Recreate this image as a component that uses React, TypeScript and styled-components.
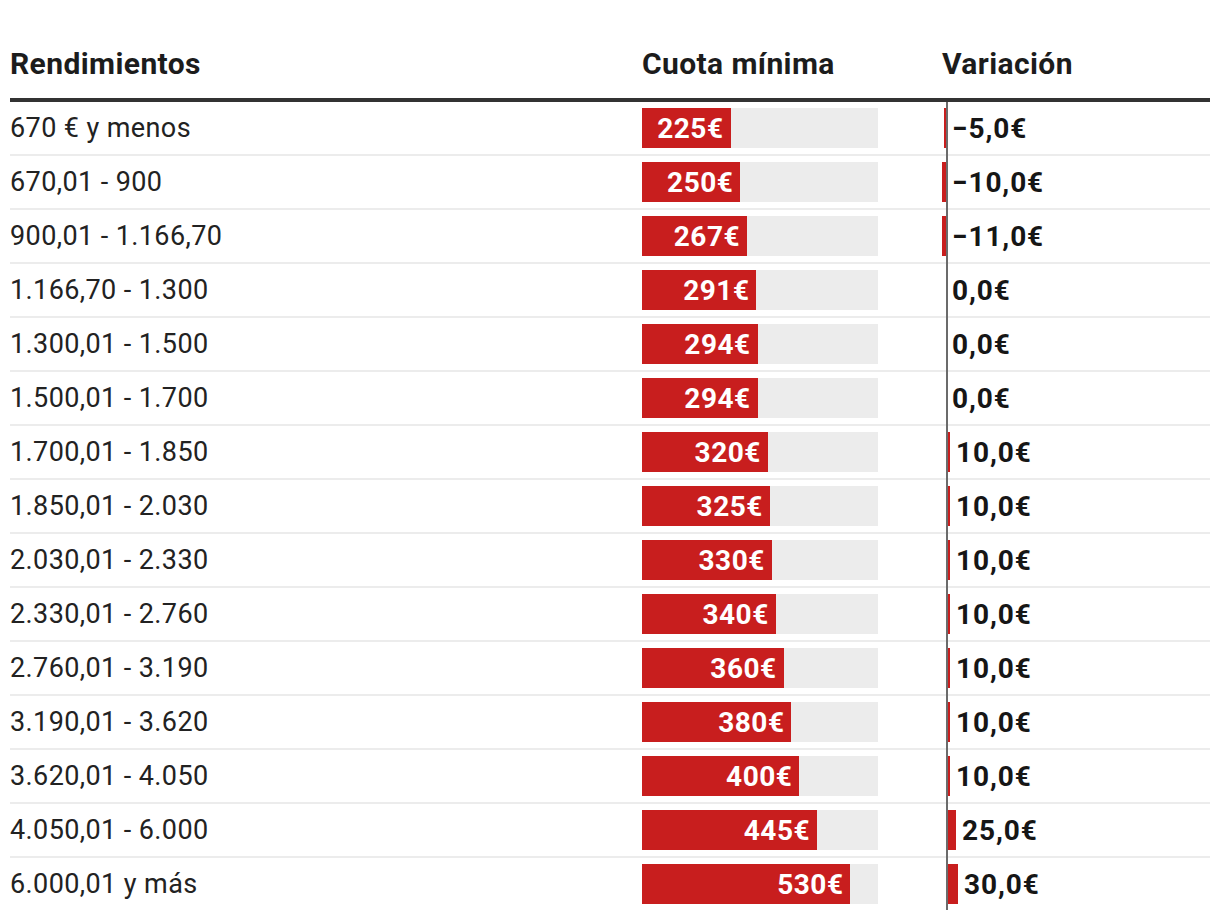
import React from "react";
import styled, { createGlobalStyle } from "styled-components";

const GlobalStyle = createGlobalStyle`
  html, body {
    margin: 0;
    padding: 0;
    background: #ffffff;
  }
  body {
    font-family: Roboto, "Liberation Sans", Arial, sans-serif;
    color: #222222;
  }
`;

type Row = { label: string; cuota: number; variacion: number };

const ROWS: Row[] = [
  { label: "670 € y menos", cuota: 225, variacion: -5 },
  { label: "670,01 - 900", cuota: 250, variacion: -10 },
  { label: "900,01 - 1.166,70", cuota: 267, variacion: -11 },
  { label: "1.166,70 - 1.300", cuota: 291, variacion: 0 },
  { label: "1.300,01 - 1.500", cuota: 294, variacion: 0 },
  { label: "1.500,01 - 1.700", cuota: 294, variacion: 0 },
  { label: "1.700,01 - 1.850", cuota: 320, variacion: 10 },
  { label: "1.850,01 - 2.030", cuota: 325, variacion: 10 },
  { label: "2.030,01 - 2.330", cuota: 330, variacion: 10 },
  { label: "2.330,01 - 2.760", cuota: 340, variacion: 10 },
  { label: "2.760,01 - 3.190", cuota: 360, variacion: 10 },
  { label: "3.190,01 - 3.620", cuota: 380, variacion: 10 },
  { label: "3.620,01 - 4.050", cuota: 400, variacion: 10 },
  { label: "4.050,01 - 6.000", cuota: 445, variacion: 25 },
  { label: "6.000,01 y más", cuota: 530, variacion: 30 },
];

const TRACK_WIDTH = 236;
const CUOTA_MAX = 600;
const VAR_SCALE = 0.4;

const Page = styled.div`
  padding: 0 10px;
  width: 1200px;
`;

const Table = styled.div`
  display: flex;
  flex-direction: column;
`;

const HeaderRow = styled.div`
  display: grid;
  grid-template-columns: 632px 300px 1fr;
  padding-top: 47px;
  padding-bottom: 17px;
  border-bottom: 4px solid #333333;
`;

const HeaderCell = styled.div`
  font-size: 30px;
  line-height: 34px;
  font-weight: 700;
  letter-spacing: 0.4px;
  color: #1c1c1c;
  white-space: nowrap;
`;

const Body = styled.div`
  position: relative;
  display: flex;
  flex-direction: column;
`;

const AxisLine = styled.div`
  position: absolute;
  top: 0;
  bottom: 0;
  left: 936px;
  width: 2px;
  background: #6b6b6b;
  z-index: 2;
`;

const DataRow = styled.div<{ $last?: boolean }>`
  display: grid;
  grid-template-columns: 632px 300px 1fr;
  align-items: center;
  height: 52px;
  border-bottom: ${(p) => (p.$last ? "none" : "2px solid #ececec")};
`;

const LabelCell = styled.div`
  font-size: 27px;
  letter-spacing: 0.4px;
  color: #222222;
  white-space: nowrap;
`;

const Track = styled.div`
  width: ${TRACK_WIDTH}px;
  height: 40px;
  background: #ececec;
  display: flex;
`;

const Bar = styled.div`
  height: 100%;
  background: #c81e1e;
  display: flex;
  align-items: center;
  justify-content: flex-end;
  padding-right: 7px;
  box-sizing: border-box;
  color: #ffffff;
  font-weight: 700;
  font-size: 28px;
  letter-spacing: 0.5px;
  white-space: nowrap;
`;

const VarCell = styled.div`
  display: flex;
  align-items: center;
  height: 40px;
`;

const NegZone = styled.div`
  width: 4px;
  height: 100%;
  display: flex;
  justify-content: flex-end;
  flex-shrink: 0;
`;

const PosZone = styled.div`
  height: 100%;
  display: flex;
  align-items: center;
`;

const VarBar = styled.div`
  height: 100%;
  background: #c81e1e;
  flex-shrink: 0;
`;

const VarValue = styled.span`
  margin-left: 6px;
  font-size: 28px;
  font-weight: 700;
  letter-spacing: 0.9px;
  color: #161616;
  white-space: nowrap;
`;

const fmtCuota = (n: number) => `${n}€`;
const fmtVar = (n: number) => {
  const s = Math.abs(n).toFixed(1).replace(".", ",");
  return `${n < 0 ? "\u2212" : ""}${s}€`;
};

export default function App() {
  return (
    <>
      <GlobalStyle />
      <Page>
        <Table>
          <HeaderRow>
            <HeaderCell>Rendimientos</HeaderCell>
            <HeaderCell>Cuota mínima</HeaderCell>
            <HeaderCell>Variación</HeaderCell>
          </HeaderRow>
          <Body>
            <AxisLine />
            {ROWS.map((r, i) => {
              const neg = r.variacion < 0 ? Math.abs(r.variacion) * VAR_SCALE : 0;
              const pos = r.variacion > 0 ? r.variacion * VAR_SCALE : 0;
              return (
                <DataRow key={r.label} $last={i === ROWS.length - 1}>
                  <LabelCell>{r.label}</LabelCell>
                  <Track>
                    <Bar style={{ width: (r.cuota / CUOTA_MAX) * TRACK_WIDTH }}>
                      {fmtCuota(r.cuota)}
                    </Bar>
                  </Track>
                  <VarCell>
                    <NegZone>
                      <VarBar style={{ width: neg }} />
                    </NegZone>
                    <PosZone>
                      <VarBar style={{ width: pos }} />
                      <VarValue>{fmtVar(r.variacion)}</VarValue>
                    </PosZone>
                  </VarCell>
                </DataRow>
              );
            })}
          </Body>
        </Table>
      </Page>
    </>
  );
}
